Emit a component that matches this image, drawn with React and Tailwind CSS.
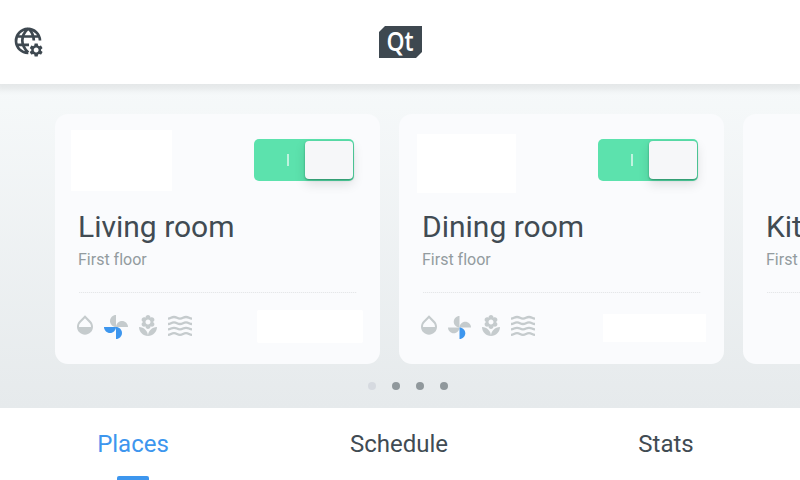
const DROP = "M17.66 8L12 2.35 6.34 8C4.78 9.56 4 11.64 4 13.64s.78 4.11 2.34 5.67 3.61 2.35 5.66 2.35 4.1-.79 5.66-2.35S20 15.64 20 13.64 19.22 9.56 17.66 8zM6 14c.01-2 .62-3.27 1.76-4.4L12 5.27l4.24 4.38C17.38 10.77 17.99 12 18 14H6z";
const FLOWER = "M12 22c4.97 0 9-4.03 9-9-4.97 0-9 4.03-9 9zM5.6 10.25c0 1.38 1.12 2.5 2.5 2.5.53 0 1.01-.16 1.42-.44l-.02.19c0 1.38 1.12 2.5 2.5 2.5s2.5-1.12 2.5-2.5l-.02-.19c.4.28.89.44 1.42.44 1.38 0 2.5-1.12 2.5-2.5 0-1-.59-1.85-1.43-2.25.84-.4 1.43-1.25 1.43-2.25 0-1.38-1.12-2.5-2.5-2.5-.53 0-1.01.16-1.42.44l.02-.19C14.5 2.12 13.38 1 12 1S9.5 2.12 9.5 3.5l.02.19c-.4-.28-.89-.44-1.42-.44-1.38 0-2.5 1.12-2.5 2.5 0 1 .59 1.85 1.43 2.25-.84.4-1.43 1.25-1.43 2.25zM12 5.5c1.38 0 2.5 1.12 2.5 2.5s-1.12 2.5-2.5 2.5S9.5 9.38 9.5 8s1.12-2.5 2.5-2.5zM3 13c0 4.97 4.03 9 9 9 0-4.97-4.03-9-9-9z";
const GEAR = "M19.14 12.94c.04-.3.06-.61.06-.94 0-.32-.02-.64-.07-.94l2.03-1.58a.49.49 0 0 0 .12-.61l-1.92-3.32a.488.488 0 0 0-.59-.22l-2.39.96c-.5-.38-1.03-.7-1.62-.94l-.36-2.54a.484.484 0 0 0-.48-.41h-3.84c-.24 0-.43.17-.47.41l-.36 2.54c-.59.24-1.13.57-1.62.94l-2.39-.96c-.22-.08-.47 0-.59.22L2.74 8.87c-.12.21-.08.47.12.61l2.03 1.58c-.05.3-.09.63-.09.94s.02.64.07.94l-2.03 1.58a.49.49 0 0 0-.12.61l1.92 3.32c.12.22.37.29.59.22l2.39-.96c.5.38 1.03.7 1.62.94l.36 2.54c.05.24.24.41.48.41h3.84c.24 0 .44-.17.47-.41l.36-2.54c.59-.24 1.13-.56 1.62-.94l2.39.96c.22.08.47 0 .59-.22l1.92-3.32c.12-.22.07-.47-.12-.61l-2.01-1.58zM12 15.6c-1.98 0-3.6-1.62-3.6-3.6s1.62-3.6 3.6-3.6 3.6 1.62 3.6 3.6-1.62 3.6-3.6 3.6z";

function Fan({ left, className }) {
  return (
    <svg viewBox="1 1 22 22" className={className} fill="#c5cbcd">
      <path d="M12 12c-3 0-5.500-2.500-5.500-5.500S9 1 12 1z" />
      <path d="M12 12c0-3 2.500-5.500 5.500-5.500S23 9 23 12z" />
      <path d="M12 12c0 3-2.500 5.500-5.500 5.500S1 15 1 12z" fill={left} />
      <path d="M12 12c3 0 5.500 2.500 5.500 5.500S15 23 12 23z" fill="#3d96ee" />
    </svg>
  );
}

function Waves() {
  return (
    <svg viewBox="0 0 24 22" className="mt-[2px] ml-2 h-[22px] w-6" fill="none" stroke="#c5cbcd" strokeWidth="2.3">
      {[2.8, 8.2, 13.6, 19].map((y) => (
        <path key={y} d={`M0 ${y + 0.8}c3 0 3-1.600 6-1.600s3 1.600 6 1.600s3-1.600 6-1.600s3 1.600 6 1.600`} />
      ))}
    </svg>
  );
}

function Toggle() {
  return (
    <div className="mt-[25px] flex h-[42px] w-[100px] items-center rounded-[5px] bg-[#5ce2ad] pr-px">
      <span className="ml-[33px] h-3 w-0.5 bg-[#c0f3df]" />
      <span className="ml-auto h-[38px] w-12 rounded-[4px] bg-[#f6f7f9] shadow-[0_1px_2px_rgba(0,80,50,0.5),0_5px_12px_rgba(0,0,0,0.12)]" />
    </div>
  );
}

function Card({ name, blank, fan, fanClass, footerBlank }) {
  return (
    <article className="flex h-[250px] w-[325px] shrink-0 flex-col rounded-[13px] bg-[#fafbfd]">
      <div className="flex h-[90px] items-start justify-between pr-[26px]">
        <div className={blank} />
        {fan && <Toggle />}
      </div>
      <h2 className="mt-[5px] pl-[23px] text-[30px] leading-9 whitespace-nowrap text-[#414b53]">{name}</h2>
      <p className="mt-[5px] pl-[23px] text-base leading-5 whitespace-nowrap text-[#939b9f] [font-variant-ligatures:none]">First floor</p>
      <div className="mt-[22px] ml-[24px] h-px w-[278px] bg-[repeating-linear-gradient(90deg,#e5e7e9_0_1px,#f5f6f8_1px_2px)]" />
      {fan && (
        <div className="flex pt-5 pl-[18px]">
          <svg viewBox="0 0 24 24" className="h-6 w-6" fill="#c5cbcd"><path d={DROP} /></svg>
          <Fan left={fan} className={fanClass} />
          <svg viewBox="0 0 24 24" className="mt-px ml-2 h-6 w-6" fill="#c5cbcd"><path d={FLOWER} /></svg>
          <Waves />
          <div className={footerBlank} />
        </div>
      )}
    </article>
  );
}

export default function App() {
  return (
    <div className="flex h-[480px] w-[800px] flex-col overflow-hidden bg-white font-[Roboto,sans-serif]">
      <header className="relative z-10 flex h-[84px] shrink-0 items-center bg-white pl-[13px] shadow-[0_2px_6px_4px_rgba(0,0,0,0.07)]">
        <svg viewBox="0 0 32 32" className="h-8 w-8" fill="none" stroke="#3e4850" strokeWidth="2.7">
          <path d="M27 14.500A12 12 0 1 0 15.300 26.900M4 10.500h22M4 18.800h12M15.300 2.500c-8 7-8 17 0 24M15.300 2.500c4 3.500 5.500 8 5.500 12" />
          <g transform="translate(15 15.900) scale(.68)" fill="#3e4850" stroke="none"><path d={GEAR} /></g>
        </svg>
        <div className="ml-[334px] flex h-8 w-[43px] justify-center bg-[#3e4850] pr-px font-['Open_Sans',sans-serif] text-[27px] leading-[30px] font-semibold text-white [clip-path:polygon(6px_0,100%_0,100%_26px,37px_100%,0_100%,0_6px)]">
          <span className="inline-block scale-x-[.85]">Qt</span>
        </div>
      </header>
      <main className="h-[324px] shrink-0 bg-linear-to-b from-[#f6f9fa] to-[#e6eaec] pt-[30px]">
        <div className="flex gap-[19px] pl-[55px]">
          <Card name="Living room" blank="mt-4 ml-4 h-[61px] w-[101px] bg-white" fan="#3d96ee" fanClass="mt-[2px] ml-[7px] h-6 w-6" footerBlank="-mt-[3px] ml-[65px] h-[33px] w-[106px] rounded-xs bg-white" />
          <Card name="Dining room" blank="mt-5 ml-[18px] h-[59px] w-[99px] bg-white" fan="#c5cbcd" fanClass="mt-[3px] ml-[7px] h-[23px] w-[23px]" footerBlank="mt-px ml-[68px] h-[28px] w-[103px] bg-white" />
          <Card name="Kitchen" />
        </div>
        <div className="mt-[18px] flex justify-center gap-4 pl-[16px]">
          <span className="h-2 w-2 rounded-full bg-[#d6dae0]" />
          <span className="h-2 w-2 rounded-full bg-[#90989c]" />
          <span className="h-2 w-2 rounded-full bg-[#90989c]" />
          <span className="h-2 w-2 rounded-full bg-[#90989c]" />
        </div>
      </main>
      <nav className="grid h-[72px] grid-cols-[266px_266px_266px] text-center text-2xl leading-8 text-[#414b53]">
        <div className="flex flex-col items-center pt-5 text-[#3d96ee]">
          <span>Places</span>
          <span className="mt-4 h-1 w-8 rounded-t-xs bg-[#3d96ee]" />
        </div>
        <div className="pt-5">Schedule</div>
        <div className="pt-5 pl-0.5">Stats</div>
      </nav>
    </div>
  );
}
